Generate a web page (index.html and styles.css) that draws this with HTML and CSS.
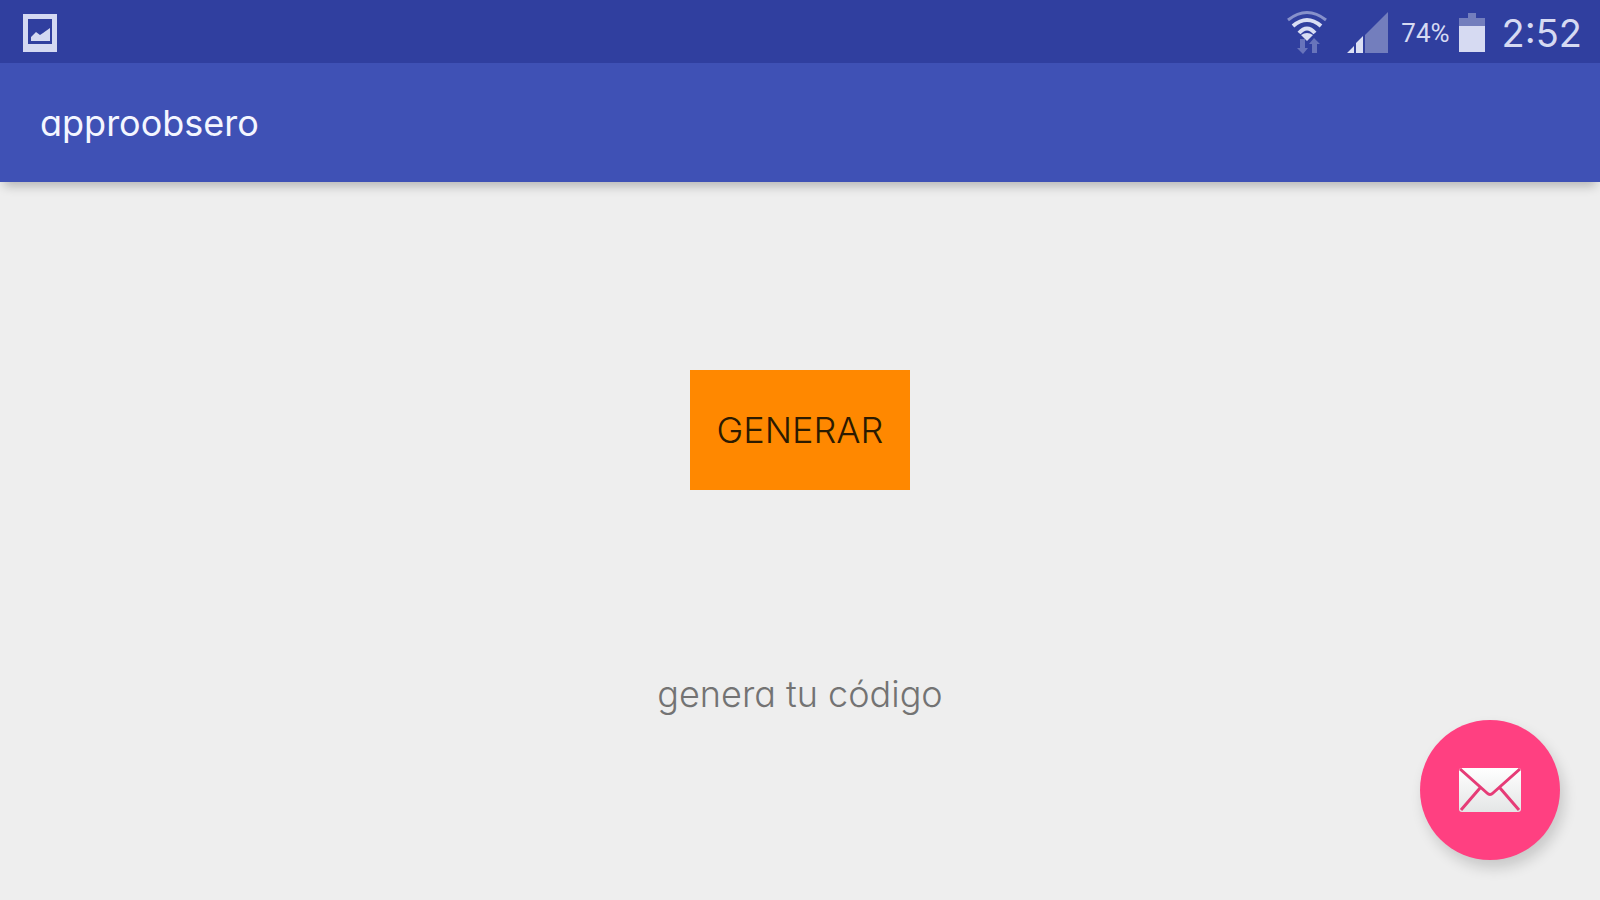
FILE: index.html
```html
<!DOCTYPE html>
<html lang="es">
<head>
<meta charset="utf-8">
<meta name="viewport" content="width=device-width, initial-scale=1">
<title>approobsero</title>
<link rel="stylesheet" href="styles.css">
</head>
<body>
<div class="screen">
  <div class="status">
    <svg class="status-picture" width="36" height="40" viewBox="0 0 36 40" aria-hidden="true">
      <path fill="#d4d9f2" fill-rule="evenodd" d="M1 1h34v38H1zM6 6v25h24V6z"/>
      <path fill="#d4d9f2" d="M9 28v-4l5-5 4 3 3-2 7-5v13z"/>
    </svg>
    <div class="status-right">
      <svg class="status-wifi" width="40" height="46" viewBox="0 0 40 46" aria-hidden="true">
        <g fill="none" stroke-linecap="butt">
          <path stroke="#8791cb" stroke-width="3" d="M1 10Q20-5 39 10"/>
          <path stroke="#d9def4" stroke-width="4" d="M6 16Q20 4 34 16M12 23Q20 14 28 23"/>
        </g>
        <path fill="#d9def4" d="M14 25Q20 21 26 25L20 31z"/>
        <path fill="#6874bb" d="M13 29h5v9h3l-5 6-6-6h3zM25 43h5V34h3l-6-6-5 6h3z"/>
      </svg>
      <svg class="status-signal" width="42" height="42" viewBox="0 0 42 42" aria-hidden="true">
        <path fill="#737ebd" d="M18 23L41 0v41H18z"/>
        <path fill="#dce0f4" d="M0 41l7-7v7zM9 31l7-7v17H9z"/>
      </svg>
      <span class="status-percent">74%</span>
      <svg class="status-battery" width="28" height="40" viewBox="0 0 28 40" aria-hidden="true">
        <path fill="#737ebd" d="M10 0h8v5h9v9H1V5h9z"/>
        <path fill="#d6daf2" d="M1 13h26v26H1z"/>
      </svg>
      <time class="status-time">2:52</time>
    </div>
  </div>
  <header class="appbar">
    <h1 class="title">approobsero</h1>
  </header>
  <main class="content">
    <button class="generate" type="button">GENERAR</button>
    <p class="hint">genera tu código</p>
  </main>
  <button class="fab" type="button" aria-label="Correo">
    <svg width="62" height="44" viewBox="0 0 62 44" aria-hidden="true">
      <defs>
        <linearGradient id="paper" x1="0" y1="0" x2="0" y2="1">
          <stop offset="0" stop-color="#ffffff"/>
          <stop offset="1" stop-color="#e4e6e6"/>
        </linearGradient>
      </defs>
      <rect width="62" height="44" rx="3" fill="url(#paper)"/>
      <path fill="none" stroke="#e63c77" stroke-width="3" d="M1 1L28 25Q31 28 34 25L61 1M2 42L21 20M60 42L41 20"/>
    </svg>
  </button>
</div>
</body>
</html>
```
FILE: styles.css
```css
* {
  box-sizing: border-box;
}

body {
  margin: 0;
  background: #eeeeee;
  font-family: Inter, "Liberation Sans", sans-serif;
  font-feature-settings: "cv11";
}

.screen {
  position: relative;
  display: flex;
  flex-direction: column;
  min-height: 100vh;
}

.status {
  display: flex;
  align-items: center;
  justify-content: space-between;
  height: 63px;
  padding: 2px 18px 0 22px;
  background: #303f9f;
  color: #d6daf2;
}

.status-right {
  display: flex;
  align-items: center;
}

.status-signal {
  margin: 0 12px 0 20px;
}

.status-percent {
  font-family: Roboto, sans-serif;
  font-size: 26px;
  line-height: 32px;
}

.status-battery {
  margin: 0 16px 0 8px;
}

.status-time {
  font-size: 38px;
  line-height: 48px;
}

.appbar {
  position: relative;
  display: flex;
  align-items: center;
  height: 119px;
  padding: 0 40px;
  background: #3f51b5;
  box-shadow: 0 8px 10px -4px rgba(0, 0, 0, 0.24);
}

.title {
  margin: 0;
  color: #f4f6ff;
  font-size: 36px;
  font-weight: 400;
  line-height: 44px;
}

.content {
  display: flex;
  flex: 1;
  flex-direction: column;
  align-items: center;
  gap: 180px;
  padding-top: 188px;
}

.generate {
  width: 220px;
  height: 120px;
  padding: 0;
  border: 0;
  background: #ff8800;
  color: #2b1a00;
  font: inherit;
  font-size: 36px;
  font-weight: 300;
}

.hint {
  margin: 0;
  color: #737373;
  font-size: 36px;
  font-weight: 300;
  line-height: 48px;
}

.fab {
  position: absolute;
  right: 40px;
  bottom: 40px;
  display: flex;
  align-items: center;
  justify-content: center;
  width: 140px;
  height: 140px;
  padding: 0;
  border: 0;
  border-radius: 50%;
  background: #ff4081;
  box-shadow: 4px 8px 14px rgba(0, 0, 0, 0.16);
}
```
